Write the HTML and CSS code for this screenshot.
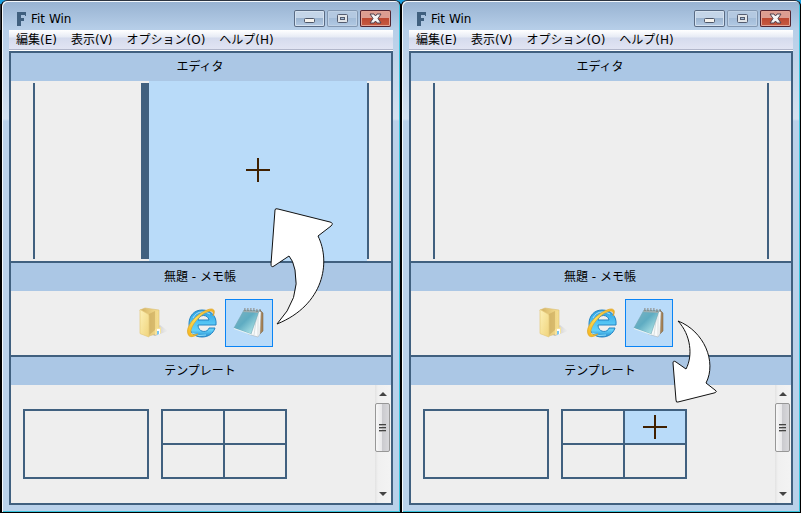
FILE: index.html
```
<!DOCTYPE html>
<html lang="ja">
<head>
<meta charset="utf-8">
<title>Fit Win</title>
<link rel="stylesheet" href="styles.css">
</head>
<body>
<svg class="defs" aria-hidden="true">
  <defs>
    <linearGradient id="gFolder" x1="0" y1="0" x2="1" y2="0"><stop offset="0" stop-color="#cfae60"/><stop offset=".35" stop-color="#e0c274"/><stop offset="1" stop-color="#f6e092"/></linearGradient>
    <linearGradient id="gFront" x1="0" y1="0" x2="1" y2="1"><stop offset="0" stop-color="#fdf1b8"/><stop offset="1" stop-color="#f0d47c"/></linearGradient>
    <linearGradient id="gShade" x1="0" y1="0" x2="1" y2="0"><stop offset="0" stop-color="#888" stop-opacity=".7"/><stop offset="1" stop-color="#bbb" stop-opacity="0"/></linearGradient>
    <linearGradient id="gE" x1="0" y1="0" x2="0" y2="1"><stop offset="0" stop-color="#2b9fe0"/><stop offset=".5" stop-color="#55c6f5"/><stop offset=".75" stop-color="#62d2fa"/><stop offset="1" stop-color="#2387cc"/></linearGradient>
    <linearGradient id="gRing" x1="0" y1="1" x2="1" y2="0"><stop offset="0" stop-color="#f4b31a"/><stop offset=".5" stop-color="#ffe05a"/><stop offset="1" stop-color="#f0b020"/></linearGradient>
    <linearGradient id="gPad" x1="0" y1="0" x2="1" y2="1"><stop offset="0" stop-color="#7fb4c2"/><stop offset=".45" stop-color="#5facc2"/><stop offset=".8" stop-color="#a4dce2"/><stop offset="1" stop-color="#61aebb"/></linearGradient>
    <symbol id="folder" viewBox="0 0 32 32">
      <path d="M14 28 L23 19 L31 25 L18 30Z" fill="url(#gShade)"/>
      <path d="M3 4 L8 2 L22 4 V27 L12 30Z" fill="url(#gFolder)" stroke="#dcc074" stroke-width=".6"/>
      <path d="M12 8 L18 5 V24 L12 29Z" fill="#c9aa5c" opacity=".6"/>
      <path d="M3 4 Q3 3 4 4 L11 8 Q12 9 12 10 V31 L4 28 Q3 28 3 27Z" fill="url(#gFront)" stroke="#e5ca7c" stroke-width=".7"/>
      <path d="M18 23 Q22 22 24 21 V27 L18 29Z" fill="#f8e49c"/>
      <path d="M20 23H23V28L20 29Z" fill="#fff"/><path d="M20 25H22V28L20 29Z" fill="#7cc4ee"/>
    </symbol>
    <symbol id="ie" viewBox="0 0 32 32">
      <path d="M31 19 H13 C13 27 23 27 24 22 H30 C28 28 23 31 17 31 C9 31 4 26 4 18 C4 10 9 4 17 4 C26 4 32 10 31 19Z M13 14 H24 C23 8 14 8 13 14Z" fill="url(#gE)" fill-rule="evenodd" stroke="#2484c4" stroke-width="1"/>
      <path d="M8 12 Q11 6 17 6 Q22 6 25 8" fill="none" stroke="#a6e0f8" stroke-width="1"/>
      <path d="M7 27 Q14 31 21 29" fill="none" stroke="#8ee0fa" stroke-width="1"/>
      <path d="M28 10 C31 5 29 1 22 4 C11 8 0 21 3 28 C4 32 9 31 13 28 C7 30 5 28 6 24 C8 16 18 6 25 5 C28 5 29 7 28 10Z" fill="url(#gRing)" stroke="#dca32a" stroke-width=".7"/>
    </symbol>
    <symbol id="notepad" viewBox="0 0 32 32">
      <path d="M27 4 L30 7 L30 25 L27 28 L24 26Z" fill="#a68458" stroke="#705a40" stroke-width=".5"/>
      <path d="M26 4 L28 6 L27 28 L25 31 L15 28Z" fill="#f8fafa" stroke="#9fa6aa" stroke-width=".5"/>
      <path d="M25 8 L25 30 M24 8 L21 29" stroke="#c3cbcd" stroke-width=".6"/>
      <path d="M11 4 L26 5 L18 28 L1 22Z" fill="url(#gPad)" stroke="#6fa6b4" stroke-width=".6"/>
      <path d="M11 4 L26 5 L25 7 L10 6Z" fill="#9dafb2"/>
      <path d="M1 22 L18 28 L18 29 L1 23Z" fill="#e9f4f4"/>
      <path d="M12 2v3M15 2v3M18 2v3M21 2v3M24 3v3M27 3v3" stroke="#777672" stroke-width="1"/>
      <path d="M12 3 H27" stroke="#d2d4d2" stroke-width=".8" stroke-dasharray="1 2"/>
    </symbol>
    <symbol id="logo" viewBox="0 0 9 14"><path d="M0 0H9V4H8V3H4V6H7V9H4V14H0Z" fill="#40607f"/></symbol>
    <symbol id="cross" viewBox="0 0 24 24"><path d="M12 0V24M0 12H24" stroke="#402000" stroke-width="2"/></symbol>
    <symbol id="min" viewBox="0 0 31 17"><rect x="10.500" y="8.500" width="10" height="4" rx="1" fill="#f5f3ee" stroke="#4d5668"/></symbol>
    <symbol id="max" viewBox="0 0 31 17"><rect x="10.500" y="4.500" width="10" height="8" rx="1" fill="#e2e5e8" stroke="#535c70"/><rect x="13.500" y="7.500" width="4" height="2" fill="#a4bdd8" stroke="#535c70"/></symbol>
    <symbol id="close" viewBox="0 0 31 17"><path d="M10 4H14L15.500 6L17 4H21L18 8.500L21 13H17L15.500 11L14 13H10L13 8.500Z" fill="#f5f5f5" stroke="#50404c" stroke-linejoin="round"/></symbol>
    <symbol id="up" viewBox="0 0 8 4"><path d="M0 4L4 0L8 4Z" fill="#444"/></symbol>
    <symbol id="down" viewBox="0 0 8 4"><path d="M0 0L4 4L8 0Z" fill="#444"/></symbol>
  </defs>
</svg>

<main class="desktop">
  <section class="window">
    <header class="titlebar">
      <svg class="logo"><use href="#logo"/></svg>
      <h1 class="title">Fit Win</h1>
      <button class="caption" aria-label="最小化"><svg><use href="#min"/></svg></button>
      <button class="caption caption-dim" aria-label="最大化"><svg><use href="#max"/></svg></button>
      <button class="caption caption-close" aria-label="閉じる"><svg><use href="#close"/></svg></button>
    </header>
    <nav class="menu">
      <button>編集(E)</button><button>表示(V)</button><button>オプション(O)</button><button>ヘルプ(H)</button>
    </nav>
    <div class="panels">
      <h2 class="heading">エディタ</h2>
      <div class="editor">
        <div class="edge"></div>
        <div class="pane pane-small"></div>
        <div class="splitter"></div>
        <div class="pane pane-large target"><svg class="cross"><use href="#cross"/></svg></div>
        <div class="edge"></div>
      </div>
      <h2 class="heading ruled">無題 - メモ帳</h2>
      <div class="apps">
        <button class="app" aria-label="エクスプローラー"><svg><use href="#folder"/></svg></button>
        <button class="app" aria-label="Internet Explorer"><svg><use href="#ie"/></svg></button>
        <div class="picked">
          <button class="app selected" aria-label="メモ帳"><svg><use href="#notepad"/></svg></button>
          <svg class="arrow arrow-up" viewBox="270 205 65 122"><path d="M277 324 Q301 298 295 270 Q293 260 289 256 L274 266 Q271 268 271 264 L275 210 Q275 208 278 209 L330 222 Q334 223 331 226 L318 236 C331 262 324 305 277 324Z"/></svg>
        </div>
      </div>
      <h2 class="heading ruled">テンプレート</h2>
      <div class="templates">
        <div class="template-list">
          <div class="template"><span class="cell"></span></div>
          <div class="template quad"><span class="cell"></span><span class="cell"></span><span class="cell"></span><span class="cell"></span></div>
        </div>
        <div class="scrollbar">
          <button class="step" aria-label="上へ"><svg><use href="#up"/></svg></button>
          <div class="thumb"><i></i><i></i><i></i></div>
          <button class="step step-down" aria-label="下へ"><svg><use href="#down"/></svg></button>
        </div>
      </div>
    </div>
  </section>

  <section class="window">
    <header class="titlebar">
      <svg class="logo"><use href="#logo"/></svg>
      <h1 class="title">Fit Win</h1>
      <button class="caption" aria-label="最小化"><svg><use href="#min"/></svg></button>
      <button class="caption caption-dim" aria-label="最大化"><svg><use href="#max"/></svg></button>
      <button class="caption caption-close" aria-label="閉じる"><svg><use href="#close"/></svg></button>
    </header>
    <nav class="menu">
      <button>編集(E)</button><button>表示(V)</button><button>オプション(O)</button><button>ヘルプ(H)</button>
    </nav>
    <div class="panels">
      <h2 class="heading">エディタ</h2>
      <div class="editor">
        <div class="edge"></div>
        <div class="pane pane-large"></div>
        <div class="edge"></div>
      </div>
      <h2 class="heading ruled">無題 - メモ帳</h2>
      <div class="apps">
        <button class="app" aria-label="エクスプローラー"><svg><use href="#folder"/></svg></button>
        <button class="app" aria-label="Internet Explorer"><svg><use href="#ie"/></svg></button>
        <div class="picked">
          <button class="app selected" aria-label="メモ帳"><svg><use href="#notepad"/></svg></button>
          <svg class="arrow arrow-down" viewBox="272 318 48 88"><path d="M278 321 C304 331 317 362 306 383 L315 390 Q318 392 314 393 L278 402 Q276 403 276 400 L273 363 Q273 360 276 362 L286 369 C293 356 291 335 278 321Z"/></svg>
        </div>
      </div>
      <h2 class="heading ruled">テンプレート</h2>
      <div class="templates">
        <div class="template-list">
          <div class="template"><span class="cell"></span></div>
          <div class="template quad"><span class="cell"></span><span class="cell target"><svg class="cross"><use href="#cross"/></svg></span><span class="cell"></span><span class="cell"></span></div>
        </div>
        <div class="scrollbar">
          <button class="step" aria-label="上へ"><svg><use href="#up"/></svg></button>
          <div class="thumb"><i></i><i></i><i></i></div>
          <button class="step step-down" aria-label="下へ"><svg><use href="#down"/></svg></button>
        </div>
      </div>
    </div>
  </section>
</main>
</body>
</html>
```
FILE: styles.css
```
:root {
  --line: #40607f;
  --heading: #abc7e5;
  --target: #b9dbf9;
  --surface: #eee;
  --frame: #b9d1ea;
}
* { box-sizing: border-box; }
body {
  margin: 0;
  font: 12px/18px "DejaVu Sans", "Noto Sans CJK JP", sans-serif;
  color: #000;
}
button {
  margin: 0;
  padding: 0;
  border: 0;
  background: none;
  font: inherit;
  color: inherit;
}
svg { display: block; }
.defs { position: absolute; width: 0; height: 0; }

.desktop {
  display: grid;
  grid-template-columns: 1fr 1fr;
  min-height: 100vh;
  padding-left: 1px;
  background: linear-gradient(#1a9fe0 0 4px, #33363c 4px 30px, #000 30px);
}
.window {
  display: flex;
  flex-direction: column;
  padding: 1px 7px 7px;
  border: 1px solid #000;
  border-top-color: #2c3440;
  border-radius: 6px 6px 0 0;
  box-shadow: inset 1px 1px #f4f8fc, inset -1px -1px #38c3dc;
  background: linear-gradient(#97b2d1 0, #b6cee8 28px, #c0d4ea 60px, #d3e1f0 118px, var(--frame) 120px);
}

.titlebar {
  display: flex;
  align-items: center;
  height: 28px;
  padding: 5px 2px 0 8px;
}
.logo { width: 9px; height: 14px; }
.title {
  flex: 1;
  margin: 0 0 0 5px;
  font-size: 12px;
  font-weight: 400;
}
.caption {
  width: 31px;
  height: 17px;
  margin-left: 2px;
  border-radius: 2px;
  background: linear-gradient(#c4d5e8 0 45%, #9cb5d1 50%, #b7cde6);
  box-shadow: inset 0 0 0 1px #596b84, inset 0 0 0 2px #d5e2f0;
}
.caption svg { width: 31px; height: 17px; }
.caption-dim {
  background: linear-gradient(#b4c9e1 0 45%, #a3bcd8 50%, #b3cbe5);
  box-shadow: inset 0 0 0 1px #8398b2, inset 0 0 0 2px #bfd1e5;
}
.caption-close {
  background: linear-gradient(#dc9d91 0 45%, #bd4932 50%, #c85d43);
  box-shadow: inset 0 0 0 1px #502431, inset 0 0 0 2px #e2a394;
}

.menu {
  display: flex;
  gap: 14px;
  height: 21px;
  padding: 1px 7px;
  border-bottom: 1px solid #fff;
  background: linear-gradient(#fff 0, #e7ebf5 7px, #d5dbed 8px, #e1e4f3 19px, #b1b6ca 19px);
}
.menu button { white-space: nowrap; }

.panels {
  display: flex;
  flex: 1;
  flex-direction: column;
  border: 2px solid var(--line);
  background: var(--surface);
}
.heading {
  margin: 0;
  padding: 5px 2px 5px 0;
  background: var(--heading);
  font-size: 12px;
  font-weight: 400;
  text-align: center;
}
.ruled { border-top: 2px solid var(--line); }

.editor {
  display: flex;
  flex: 1;
  min-height: 120px;
  padding: 0 22px;
}
.edge, .splitter {
  width: 2px;
  margin: 2px 0;
  background: var(--line);
}
.splitter { width: 8px; }
.pane {
  display: grid;
  place-items: center;
  padding-bottom: 2px;
}
.pane-small { flex: 106 0 0; }
.pane-large { flex: 218 0 0; }
.target { background: var(--target); }
.cross { width: 24px; height: 24px; }

.apps {
  display: flex;
  justify-content: center;
  padding: 8px 0;
}
.app {
  display: grid;
  place-items: center;
  width: 48px;
  height: 48px;
  padding-bottom: 2px;
}
.app svg { width: 32px; height: 32px; }
.selected {
  border: 1px solid #0a84f5;
  background: var(--target);
}
.picked { position: relative; }
.arrow {
  position: absolute;
  z-index: 1;
  pointer-events: none;
  fill: #fff;
  stroke: #111;
  stroke-width: 1;
  stroke-linejoin: round;
}
.arrow-up { left: 45px; top: -94px; width: 65px; height: 122px; }
.arrow-down { left: 47px; top: 19px; width: 48px; height: 88px; }

.templates { display: flex; height: 118px; }
.template-list {
  display: flex;
  flex: 1;
  align-items: flex-start;
  gap: 12px;
  padding: 24px 12px;
}
.template {
  display: grid;
  gap: 2px;
  width: 126px;
  height: 70px;
  border: 2px solid var(--line);
  background: var(--line);
}
.quad { grid-template: 1fr 1fr / 1fr 1fr; }
.cell {
  display: grid;
  place-items: center;
  background: var(--surface);
}
.cell.target { background: var(--target); }

.scrollbar {
  display: flex;
  flex-direction: column;
  width: 16px;
  background: linear-gradient(90deg, #e2e2e2, #f0f0f0 3px, #f3f3f3);
}
.step {
  display: grid;
  place-items: center;
  height: 18px;
}
.step svg { width: 8px; height: 4px; }
.step-down { margin-top: auto; }
.thumb {
  display: flex;
  flex-direction: column;
  align-items: center;
  justify-content: center;
  gap: 1px;
  width: 15px;
  height: 49px;
  border: 1px solid #979797;
  border-radius: 2px;
  background: linear-gradient(90deg, #f7f7f7, #e8e8ea 45%, #cbcbcf 50%, #d8d8db);
}
.thumb i {
  width: 7px;
  height: 2px;
  border-top: 1px solid #444;
  background: #aaa;
}
```
